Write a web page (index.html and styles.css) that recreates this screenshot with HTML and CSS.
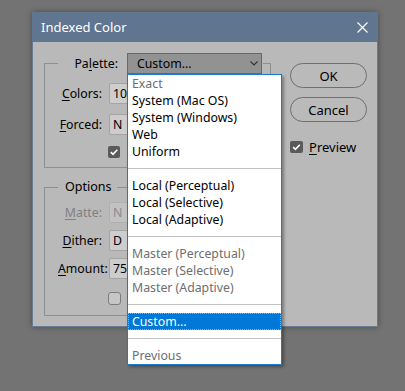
FILE: index.html
```html
<!DOCTYPE html>
<html lang="en">
<head>
  <meta charset="UTF-8" />
  <meta name="viewport" content="width=device-width, initial-scale=1.0"/>
  <title>Indexed Color</title>
  <link rel="stylesheet" href="styles.css">
</head>
<body>
  <div class="dialog">
    <div class="titlebar">
      <span class="title">Indexed Color</span>
      <svg class="close" width="11" height="11" viewBox="0 0 11 11">
        <path d="M0.5 0.5 L10.5 10.5 M10.5 0.5 L0.5 10.5" stroke="#fff" stroke-width="1.2" fill="none"/>
      </svg>
    </div>
    <div class="dialog-body">
      <div class="left-col">
        <fieldset class="group group-palette">
          <legend class="legend-palette">
            <span class="palette-label">Pa<u>l</u>ette:</span>
            <span class="combo-wrap">
              <span class="combo">
                <span>Custom...</span>
                <svg width="8" height="5" viewBox="0 0 8 5"><path d="M0.5 0.5 L4 4 L7.5 0.5" stroke="#333" stroke-width="1.1" fill="none"/></svg>
              </span>
              <ul class="dropdown">
                <li class="muted">Exact</li>
                <li>System (Mac OS)</li>
                <li>System (Windows)</li>
                <li>Web</li>
                <li>Uniform</li>
                <li class="sep"></li>
                <li>Local (Perceptual)</li>
                <li>Local (Selective)</li>
                <li>Local (Adaptive)</li>
                <li class="sep"></li>
                <li class="muted">Master (Perceptual)</li>
                <li class="muted">Master (Selective)</li>
                <li class="muted">Master (Adaptive)</li>
                <li class="sep"></li>
                <li class="selected">Custom...</li>
                <li class="sep"></li>
                <li class="muted">Previous</li>
              </ul>
            </span>
          </legend>
          <div class="row">
            <span class="label"><u>C</u>olors:</span>
            <span class="field">10</span>
          </div>
          <div class="row row-forced">
            <span class="label"><u>F</u>orced:</span>
            <span class="field">N</span>
          </div>
          <div class="row row-check">
            <span class="check on">
              <svg width="12" height="12" viewBox="0 0 12 12"><path d="M2.8 6.2 L5 8.3 L9.3 3.8" stroke="#fff" stroke-width="1.6" fill="none"/></svg>
            </span>
          </div>
        </fieldset>

        <fieldset class="group group-options">
          <legend class="legend-options">Options</legend>
          <div class="row">
            <span class="label disabled"><u>M</u>atte:</span>
            <span class="field disabled">N</span>
          </div>
          <div class="row">
            <span class="label"><u>D</u>ither:</span>
            <span class="field">D</span>
          </div>
          <div class="row">
            <span class="label"><u>A</u>mount:</span>
            <span class="field">75</span>
          </div>
          <div class="row row-check2">
            <span class="check off"></span>
          </div>
        </fieldset>
      </div>

      <div class="right-col">
        <button class="btn">OK</button>
        <button class="btn">Cancel</button>
        <div class="preview">
          <span class="check on">
            <svg width="13" height="12" viewBox="0 0 13 12"><path d="M3.2 6.2 L5.4 8.3 L9.8 3.8" stroke="#fff" stroke-width="1.6" fill="none"/></svg>
          </span>
          <span><u>P</u>review</span>
        </div>
      </div>
    </div>
  </div>
</body>
</html>
```

FILE: styles.css
```css
body { margin: 0; padding: 12px 0 0 32px; background: #737373; font-family: "Noto Sans", sans-serif; font-size: 12.3px; color: #000; height: 391px; box-sizing: border-box; overflow: hidden;}
u { text-decoration: underline; text-underline-offset: 2px;}

.dialog { width: 346px; height: 315px; background: #b9b9b9; box-shadow: 0 0 6px rgba(0,0,0,0.35); box-sizing: border-box; border: 1px solid #687c93; border-top: none;}
.titlebar { height: 30px; background: #5f7590; display: flex; align-items: center; justify-content: space-between; padding: 0 10px 0 9px; margin: 0 -1px;}
.title { color: #fff; font-size: 13px;}
.close { display: block;}

.dialog-body { display: flex; padding: 11px 0 0 11px;}
.left-col { width: 227px;}
.right-col { width: 77px; margin-left: 19px; margin-top: 10px; display: flex; flex-direction: column;}

.group { margin: 0; padding: 0 0 0 13px; border: 1px solid #8f8f8f; min-width: 0;}
.group legend { padding: 0;}
.group-palette { padding-top: 9px; padding-bottom: 9px;}
.group-options { margin-top: 10px; padding-top: 6px; padding-bottom: 10px;}

.legend-palette { display: flex; align-items: center; padding-right: 1px !important;}
.palette-label { width: 60px; text-align: right; margin-right: 9px;}
.combo-wrap { position: relative; display: block;}
.combo { width: 135px; height: 21px; box-sizing: border-box; border: 1px solid #1f7bd0; background: #929292; display: flex; align-items: center; justify-content: space-between; padding: 0 3px 0 9px;}
.legend-options { padding: 0 6px 0 7px !important; line-height: 18px; font-size: 12.5px;}

.dropdown { position: absolute; top: 100%; left: 0; width: 153px; margin: 0; padding: 0; list-style: none; background: #fff; border: 1px solid #1b7ccf; box-shadow: 2px 2px 3px rgba(0,0,0,0.35); z-index: 2;}
.dropdown li { height: 17px; line-height: 17px; padding-left: 4px; white-space: nowrap;}
.dropdown .muted { color: #6e6e6e;}
.dropdown .sep { height: 8px; border-bottom: 1px solid #c3c3c3; margin-bottom: 8px; padding: 0;}
.dropdown .selected { background: #0078d7; color: #fff; outline: 1px dotted #7fb6e6; outline-offset: -1px;}

.row { display: flex; align-items: center; height: 21px;}
.row + .row { margin-top: 7px;}
.row-forced { margin-top: 10px !important;}
.row-check { height: 12px; margin-top: 11px !important; padding-left: 50px;}
.row-check2 { height: 13px; margin-top: 13px !important; padding-left: 50px;}
.label { width: 44px; text-align: right; margin-right: 7px; white-space: nowrap;}
.label.disabled { color: #808080;}
.field { width: 70px; height: 21px; box-sizing: border-box; border: 1px solid #a4a4a4; border-radius: 2px; background: #cdcdcd; padding-left: 3px; line-height: 19px;}
.field.disabled { background: #c2c2c2; border-color: #b0b0b0; color: #8a8a8a;}

.check { display: inline-flex; box-sizing: border-box; border-radius: 2px;}
.check.on { width: 12px; height: 12px; background: #5a5a5a;}
.check.off { width: 13px; height: 13px; border: 1px solid #7c7c7c; background: #c6c6c6; border-radius: 3px;}

.btn { height: 25px; border: 1px solid #6f6f6f; border-radius: 13px; background: #bababa; font-family: "Noto Sans", sans-serif; font-size: 13px; color: #000; padding: 0;}
.btn + .btn { margin-top: 9px;}
.preview { display: flex; align-items: center; margin-top: 16px; font-size: 13px;}
.preview .check.on { width: 13px; height: 12px;}
.preview span + span { margin-left: 6px;}
```
